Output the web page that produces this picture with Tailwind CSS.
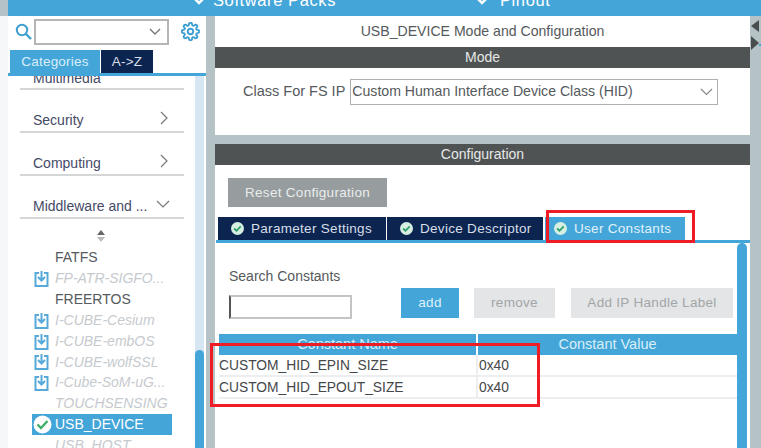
<!DOCTYPE html>
<html lang="en">
<head>
<meta charset="UTF-8">
<title>USB_DEVICE Mode and Configuration</title>
<script src="https://cdn.jsdelivr.net/npm/@tailwindcss/browser@4"></script>
</head>
<body class="font-['Liberation_Sans',Arial,sans-serif] bg-white">
<div class="relative w-[761px] h-[448px] overflow-hidden flex flex-col bg-[#b5c2c6]">

  <!-- top bar -->
  <header class="ml-2 h-4 shrink-0 bg-[#44a6d8] overflow-hidden flex text-white text-[16.5px] tracking-[0.6px] leading-[16px]">
    <div class="ml-[183px] w-[283px] -mt-[17px] flex items-center gap-[6px]">
      <svg width="16" height="10" viewBox="0 0 16 10" class="mt-[1px]"><path d="M2 2l6 6 6-6" fill="none" stroke="#fff" stroke-width="2.5"/></svg>
      <span>Software Packs</span>
    </div>
    <div class="-mt-[17px] flex items-center gap-[10px]">
      <svg width="16" height="10" viewBox="0 0 16 10" class="mt-[1px]"><path d="M2 2l6 6 6-6" fill="none" stroke="#fff" stroke-width="2.5"/></svg>
      <span>Pinout</span>
    </div>
  </header>

  <div class="flex flex-1 min-h-0">
    <div class="w-2 bg-[#f5f7f8]"></div>

    <!-- left panel -->
    <aside class="w-[198px] bg-white flex flex-col overflow-hidden">
      <div class="h-[34px] shrink-0 flex items-center pb-[3px] pl-[7px]">
        <svg width="17" height="17" viewBox="0 0 17 17"><circle cx="7" cy="7" r="5.2" fill="none" stroke="#3f9fd2" stroke-width="2"/><path d="M11 11l5 5" stroke="#3f9fd2" stroke-width="2.4"/></svg>
        <div class="ml-[2px] w-[135px] h-[26px] border-2 border-[#b5b5b5] flex items-center justify-end pr-[6px]">
          <svg width="12" height="8" viewBox="0 0 12 8"><path d="M1 1l5 5 5-5" fill="none" stroke="#777" stroke-width="1.4"/></svg>
        </div>
        <svg class="ml-[12px]" width="19" height="19" viewBox="0 0 24 24" fill="none" stroke="#3f9fd2" stroke-width="2.4"><circle cx="12" cy="12" r="3.4"/><path d="M19.4 15a1.7 1.7 0 0 0 .3 1.8l.1.1a2 2 0 1 1-2.8 2.8l-.1-.1a1.7 1.7 0 0 0-2.9 1.2V21a2 2 0 1 1-4 0v-.1a1.7 1.7 0 0 0-2.9-1.2l-.1.1a2 2 0 1 1-2.8-2.8l.1-.1a1.7 1.7 0 0 0-1.2-2.9H3a2 2 0 1 1 0-4h.1a1.7 1.7 0 0 0 1.2-2.9l-.1-.1a2 2 0 1 1 2.8-2.8l.1.1a1.7 1.7 0 0 0 1.9.3H9a1.7 1.7 0 0 0 1-1.5V3a2 2 0 1 1 4 0v.1a1.7 1.7 0 0 0 2.9 1.2l.1-.1a2 2 0 1 1 2.8 2.8l-.1.1a1.7 1.7 0 0 0 1.2 2.9H21a2 2 0 1 1 0 4h-.1a1.7 1.7 0 0 0-1.5 1z"/></svg>
      </div>

      <div class="flex h-[23px] shrink-0 ml-[2px] text-[13.5px] tracking-[0.2px] leading-[23px]">
        <div class="w-[90px] bg-[#44a6d8] text-[#d9eef8] text-center">Categories</div>
        <div class="ml-px w-[52px] bg-[#0b2550] text-[#d8dfe8] text-center">A-&gt;Z</div>
      </div>
      <div class="h-[3px] shrink-0 bg-[#44a6d8]"></div>

      <div class="flex-1 min-h-0 flex">
        <!-- category list -->
        <div class="w-[187px] shrink-0 overflow-hidden">
          <div class="ml-3 w-[164px] text-[14px] text-[#454a68]">
            <div class="h-[14px] border-b-2 border-[#d4d6d8] overflow-hidden relative">
              <span class="block pl-[13px] -mt-[8px] leading-[20px]">Multimedia</span>
            </div>
            <div class="h-[43px] border-b-2 border-[#d4d6d8] flex items-end justify-between pl-[13px] pr-[16px] pb-[1px] leading-[20px]">
              <span>Security</span>
              <svg class="mb-[5px]" width="8" height="14" viewBox="0 0 8 14"><path d="M1 1l6 6-6 6" fill="none" stroke="#777" stroke-width="1.2"/></svg>
            </div>
            <div class="h-[43px] border-b-2 border-[#d4d6d8] flex items-end justify-between pl-[13px] pr-[16px] pb-[1px] leading-[20px]">
              <span>Computing</span>
              <svg class="mb-[5px]" width="8" height="14" viewBox="0 0 8 14"><path d="M1 1l6 6-6 6" fill="none" stroke="#777" stroke-width="1.2"/></svg>
            </div>
            <div class="h-[43px] border-b-2 border-[#d4d6d8] flex items-end justify-between pl-[13px] pr-[14px] pb-[1px] leading-[20px]">
              <span>Middleware and ...</span>
              <svg class="mb-[8px]" width="14" height="8" viewBox="0 0 14 8"><path d="M1 1l6 6 6-6" fill="none" stroke="#777" stroke-width="1.2"/></svg>
            </div>
          </div>

          <div class="flex w-[186px] mt-[10px] mb-[4px] pl-[88px]">
            <svg width="10" height="14" viewBox="0 0 10 14"><path d="M5 1l4 5H1z" fill="#666"/><path d="M5 13l4-5H1z" fill="#bbb"/></svg>
          </div>

          <ul class="text-[14px] leading-[20.9px] mt-[3px]">
            <li class="pl-[47px] text-[#555a60]">FATFS</li>
            <li class="flex items-center pl-[26px] text-[#c6cace] italic">
              <svg class="mr-[6px] shrink-0" width="15" height="17" viewBox="0 0 15 17" fill="none" stroke="#56a9d8" stroke-width="2"><path d="M5 3H1.5v13h12V3H10"/><path d="M7.5 1v9M4 7l3.5 3.5L11 7"/></svg>
              <span>FP-ATR-SIGFO...</span>
            </li>
            <li class="pl-[47px] text-[#555a60]">FREERTOS</li>
            <li class="flex items-center pl-[26px] text-[#c6cace] italic">
              <svg class="mr-[6px] shrink-0" width="15" height="17" viewBox="0 0 15 17" fill="none" stroke="#56a9d8" stroke-width="2"><path d="M5 3H1.5v13h12V3H10"/><path d="M7.5 1v9M4 7l3.5 3.5L11 7"/></svg>
              <span>I-CUBE-Cesium</span>
            </li>
            <li class="flex items-center pl-[26px] text-[#c6cace] italic">
              <svg class="mr-[6px] shrink-0" width="15" height="17" viewBox="0 0 15 17" fill="none" stroke="#56a9d8" stroke-width="2"><path d="M5 3H1.5v13h12V3H10"/><path d="M7.5 1v9M4 7l3.5 3.5L11 7"/></svg>
              <span>I-CUBE-embOS</span>
            </li>
            <li class="flex items-center pl-[26px] text-[#c6cace] italic">
              <svg class="mr-[6px] shrink-0" width="15" height="17" viewBox="0 0 15 17" fill="none" stroke="#56a9d8" stroke-width="2"><path d="M5 3H1.5v13h12V3H10"/><path d="M7.5 1v9M4 7l3.5 3.5L11 7"/></svg>
              <span>I-CUBE-wolfSSL</span>
            </li>
            <li class="flex items-center pl-[26px] text-[#c6cace] italic">
              <svg class="mr-[6px] shrink-0" width="15" height="17" viewBox="0 0 15 17" fill="none" stroke="#56a9d8" stroke-width="2"><path d="M5 3H1.5v13h12V3H10"/><path d="M7.5 1v9M4 7l3.5 3.5L11 7"/></svg>
              <span>I-Cube-SoM-uG...</span>
            </li>
            <li class="pl-[47px] text-[#c6cace] italic">TOUCHSENSING</li>
            <li class="ml-[24px] w-[140px] h-[21px] flex items-center bg-[#44a6d8] text-white">
              <svg class="mx-[1px] shrink-0" width="19" height="19" viewBox="0 0 19 19"><circle cx="9.5" cy="9.5" r="9" fill="#fff"/><path d="M4.5 9.5l3.5 3.5 6.5-7" fill="none" stroke="#3fae6a" stroke-width="2.4"/></svg>
              <span class="ml-[2px]">USB_DEVICE</span>
            </li>
            <li class="pl-[47px] text-[#c6cace] italic">USB_HOST</li>
          </ul>
        </div>
        <!-- scrollbar -->
        <div class="w-[9px] shrink-0 bg-[#d6e6f2] flex flex-col justify-end">
          <div class="h-[98px] bg-[#44a6d8] rounded-t-[5px]"></div>
        </div>
      </div>
    </aside>

    <div class="w-[9px] bg-[#b5c2c6]"></div>

    <!-- right panel -->
    <main class="w-[535px] flex flex-col">
      <div class="bg-white h-[119px] flex flex-col">
        <h1 class="h-[31px] text-center text-[14.1px] leading-[31px] text-[#55595c]">USB_DEVICE Mode and Configuration</h1>
        <div class="h-[21px] bg-[#505353] text-center text-[14px] leading-[21px] text-[#e6e8e8]">Mode</div>
        <div class="flex items-center mt-[11px] pl-[28px] text-[14.1px] text-[#55595c]">
          <span class="text-[14.5px]">Class For FS IP</span>
          <div class="ml-[5px] w-[368px] h-[26px] border border-[#b0b0b0] flex items-center justify-between pl-px pr-[4px]">
            <span>Custom Human Interface Device Class (HID)</span>
            <svg width="13" height="8" viewBox="0 0 13 8"><path d="M1 1l5.5 5.5L12 1" fill="none" stroke="#888" stroke-width="1.2"/></svg>
          </div>
        </div>
      </div>

      <div class="h-[9px] shrink-0"></div>

      <div class="flex-1 min-h-0 bg-white flex flex-col">
        <div class="h-[21px] shrink-0 bg-[#505353] text-center text-[14px] leading-[21px] text-[#e6e8e8]">Configuration</div>
        <div class="mt-[13px] ml-[13px] w-[159px] h-[29px] shrink-0 bg-[#979d9f] text-center text-[13.5px] tracking-[0.3px] leading-[29px] text-[#e9ecec]">Reset Configuration</div>

        <div class="mt-[10px] ml-[3px] flex h-[23px] shrink-0 text-[13.5px] tracking-[0.3px] leading-[23px] text-[#d8dfe8]">
          <div class="w-[168px] bg-[#0b2550] flex items-center pl-[13px] gap-[7px]">
            <svg width="13" height="13" viewBox="0 0 13 13"><circle cx="6.5" cy="6.5" r="6.5" fill="#d6efe2"/><path d="M3.2 6.5l2.3 2.3 4.2-4.4" fill="none" stroke="#2f9e6a" stroke-width="1.8"/></svg>
            <span>Parameter Settings</span>
          </div>
          <div class="ml-px w-[156px] bg-[#0b2550] flex items-center pl-[13px] gap-[7px]">
            <svg width="13" height="13" viewBox="0 0 13 13"><circle cx="6.5" cy="6.5" r="6.5" fill="#d6efe2"/><path d="M3.2 6.5l2.3 2.3 4.2-4.4" fill="none" stroke="#2f9e6a" stroke-width="1.8"/></svg>
            <span>Device Descriptor</span>
          </div>
          <div class="ml-[2px] w-[140px] bg-[#44a6d8] text-[#e0f1fa] flex items-center pl-[9px] gap-[7px]">
            <svg width="13" height="13" viewBox="0 0 13 13"><circle cx="6.5" cy="6.5" r="6.5" fill="#d6efe2"/><path d="M3.2 6.5l2.3 2.3 4.2-4.4" fill="none" stroke="#2f9e6a" stroke-width="1.8"/></svg>
            <span>User Constants</span>
          </div>
        </div>
        <div class="h-[3px] shrink-0 ml-px bg-[#44a6d8]"></div>

        <div class="flex flex-1 min-h-0">
          <div class="w-[522px] shrink-0">
            <div class="flex">
              <div class="ml-[14px] w-[172px] pt-[24px]">
                <div class="text-[14px] leading-[18px] text-[#55595c]">Search Constants</div>
                <div class="mt-[10px] w-[123px] h-[24px] border-2 border-[#c4c4c4] border-l-[#555]"></div>
              </div>
              <div class="pt-[45px] flex text-[13.5px] tracking-[0.3px] leading-[30px] text-center">
                <div class="w-[58px] h-[30px] bg-[#44a6d8] text-[#dff0f9]">add</div>
                <div class="ml-[15px] w-[81px] h-[30px] bg-[#e3e5e6] text-[#a2a6a8]">remove</div>
                <div class="ml-[16px] w-[162px] h-[30px] bg-[#e3e5e6] text-[#a2a6a8]">Add IP Handle Label</div>
              </div>
            </div>

            <div class="mt-[15px] ml-[4px] w-[518px] text-[13.8px]">
              <div class="flex h-[21px] text-center text-[14.5px] text-[#d9eef8] leading-[21px] gap-[2px]">
                <div class="w-[257px] bg-[#44a6d8]">Constant Name</div>
                <div class="flex-1 bg-[#44a6d8]">Constant Value</div>
              </div>
              <div class="flex h-[22px] leading-[21px] text-[#45484a] border-b-2 border-[#eceeef]">
                <div class="w-[259px] border-r-2 border-[#eceeef]">CUSTOM_HID_EPIN_SIZE</div>
                <div class="pl-px">0x40</div>
              </div>
              <div class="flex h-[22px] leading-[21px] text-[#45484a] border-b-2 border-[#eceeef]">
                <div class="w-[259px] border-r-2 border-[#eceeef]">CUSTOM_HID_EPOUT_SIZE</div>
                <div class="pl-px">0x40</div>
              </div>
            </div>
          </div>
          <div class="w-[10px] shrink-0 bg-[#44a6d8] rounded-t-[5px]"></div>
        </div>
      </div>
    </main>
  </div>

  <!-- red annotation boxes -->
  <div class="absolute left-[546px] top-[210px] w-[149px] h-[33px] border-[3px] border-[#ee1c25]"></div>
  <div class="absolute left-[210px] top-[343px] w-[330px] h-[64px] border-[3px] border-[#ee1c25]"></div>
  <!-- splitter arrows -->
  <svg class="absolute left-[750px] top-[18px]" width="11" height="36" viewBox="0 0 11 36"><path d="M9 2v12L1 8z" fill="#4a4d4e"/><path d="M1 18v14l8-7z" fill="#4a4d4e"/><path d="M9 26h2v2H9z" fill="#44a6d8"/></svg>
</div>
</body>
</html>
